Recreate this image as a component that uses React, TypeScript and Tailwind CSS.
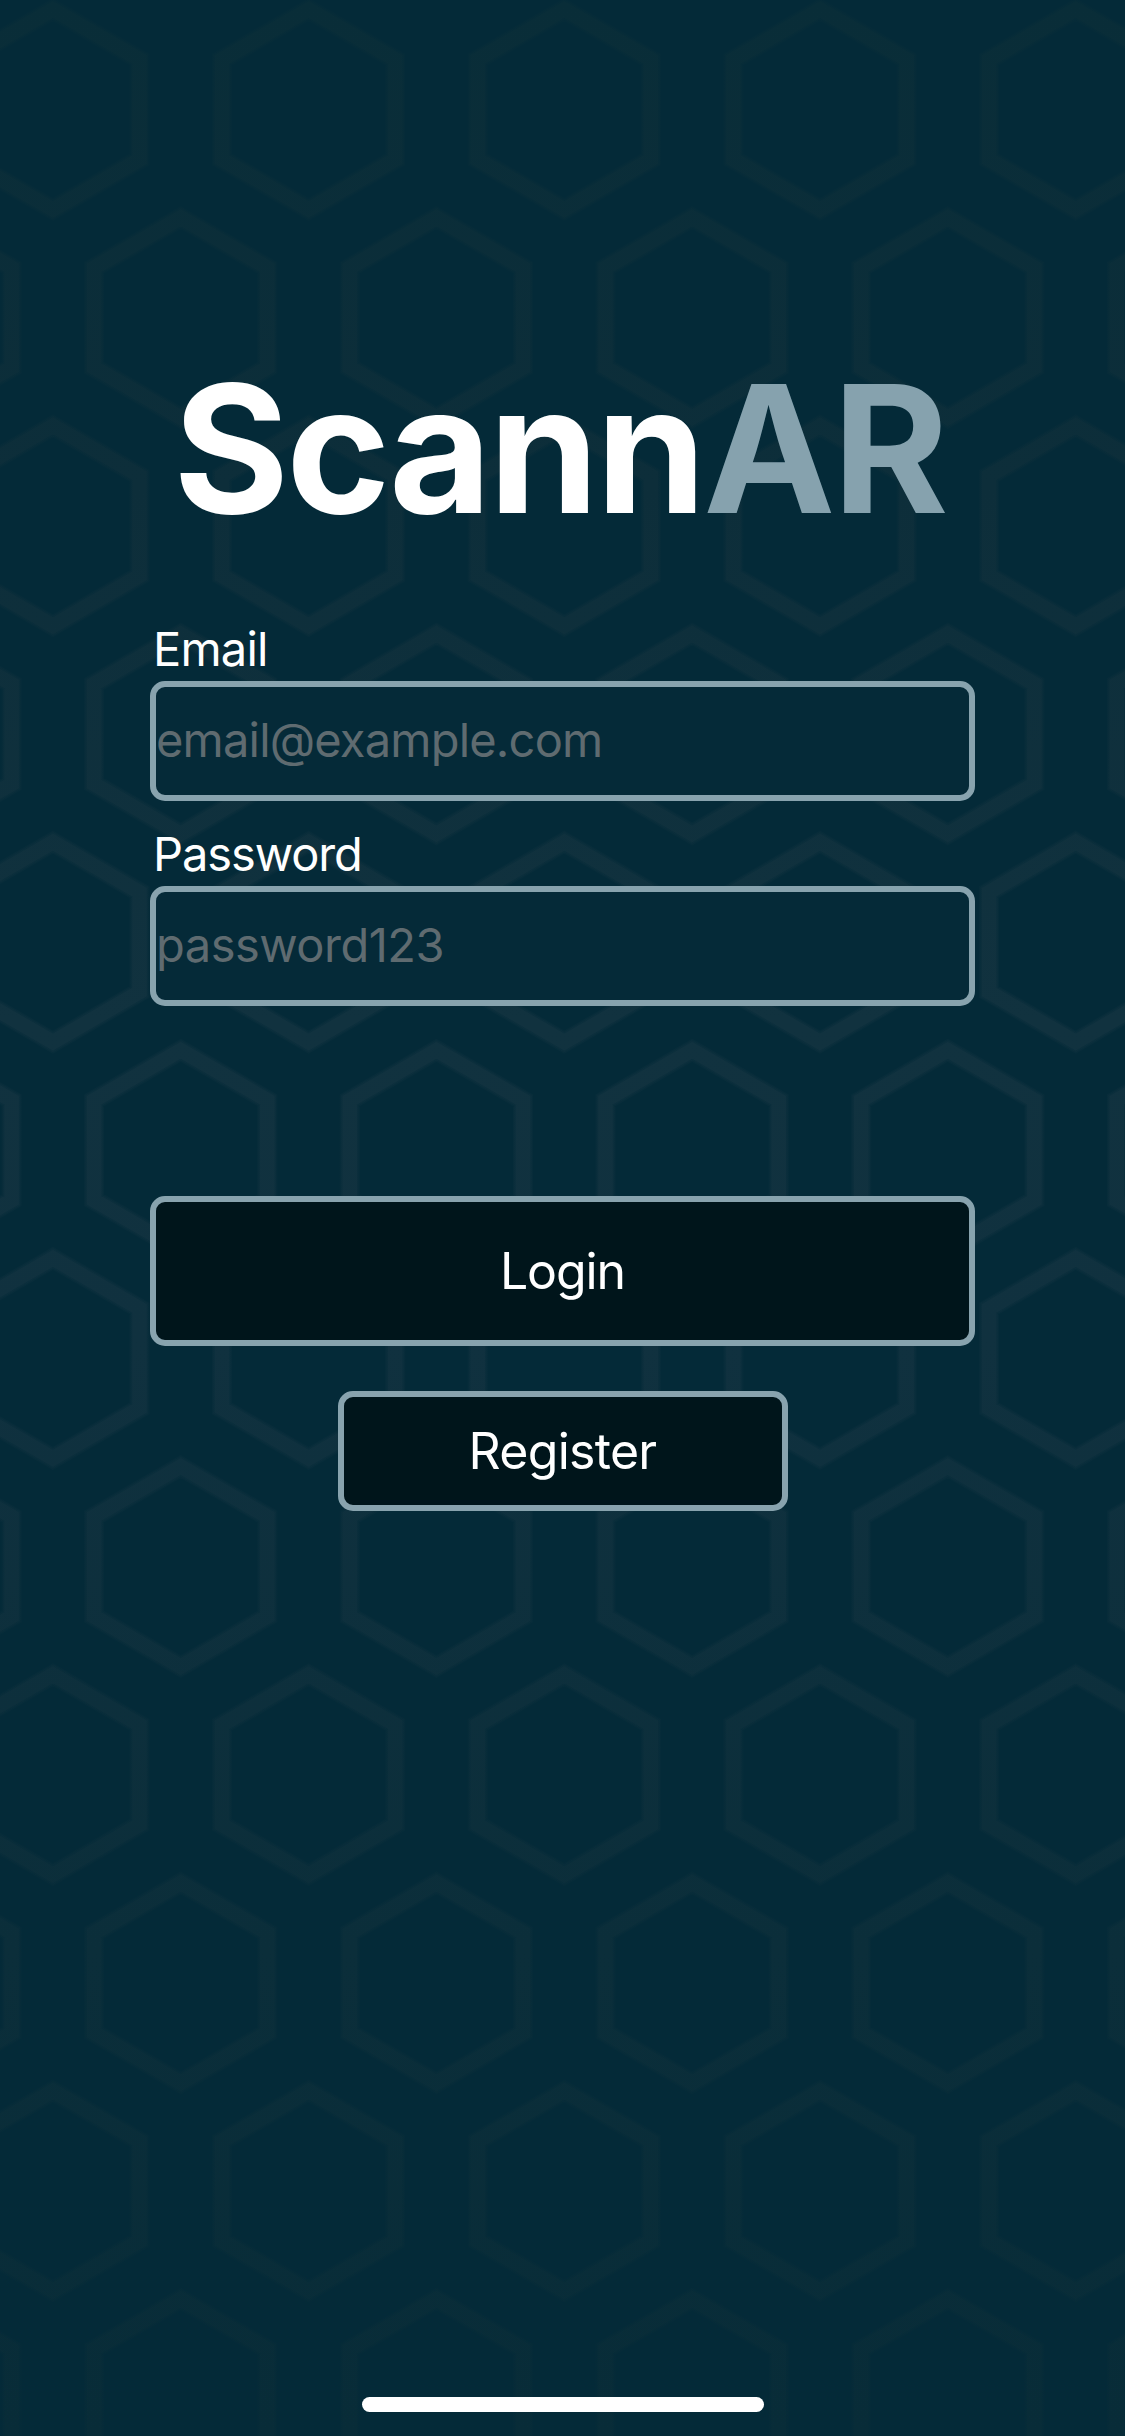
import React from "react";

const COLUMN_STEP = 255.7;
const ROW_STEP = 208.15;

const rows = Array.from({ length: 12 }, (_, row) => row);
const columns = Array.from({ length: 6 }, (_, column) => column);

const honeycombPath = rows
  .flatMap((row) =>
    columns.map((column) => {
      const x = (row % 2 === 0 ? 52.9 : -75) + column * COLUMN_STEP;
      const y = 109.5 + row * ROW_STEP;
      return `M${x},${y - 100} l86.6,50 v100 l-86.6,50 l-86.6,-50 v-100 Z`;
    }),
  )
  .join(" ");

function HoneycombBackground() {
  return (
    <svg
      aria-hidden="true"
      className="absolute inset-0 h-full w-full"
      viewBox="0 0 1125 2436"
      fill="none"
    >
      <defs>
        <linearGradient id="honeycomb" gradientUnits="userSpaceOnUse" x1="0" y1="0" x2="0" y2="2436">
          <stop offset="0" stopColor="#092d38" />
          <stop offset="0.2" stopColor="#0d2e3a" />
          <stop offset="0.42" stopColor="#11323f" />
          <stop offset="0.55" stopColor="#10313f" />
          <stop offset="0.8" stopColor="#0b2e3a" />
          <stop offset="1" stopColor="#082c38" />
        </linearGradient>
      </defs>
      {[
        { width: 20, opacity: 0.3 },
        { width: 17.5, opacity: 0.4 },
        { width: 14.5, opacity: 1 },
      ].map((layer) => (
        <path
          key={layer.width}
          stroke="url(#honeycomb)"
          strokeWidth={layer.width}
          strokeOpacity={layer.opacity}
          d={honeycombPath}
        />
      ))}
    </svg>
  );
}

type FieldProps = {
  id: string;
  label: string;
  placeholder: string;
  labelClass: string;
  inputClass: string;
};

function Field({ id, label, placeholder, labelClass, inputClass }: FieldProps) {
  return (
    <div className="flex flex-col">
      <label htmlFor={id} className={`pb-[2px] pl-[3px] text-[47px] leading-[58px] text-white ${labelClass}`}>
        {label}
      </label>
      <input
        id={id}
        type="text"
        placeholder={placeholder}
        className={`mt-[1px] h-[120px] w-full rounded-[15px] border-[6px] border-[#88a3ae] bg-[#052a38] pb-[3px] text-[47px] text-white outline-none placeholder:text-[#5f6b70] placeholder:opacity-100 ${inputClass}`}
      />
    </div>
  );
}

export default function App() {
  return (
    <div className="relative flex h-[2436px] w-[1125px] flex-col items-center overflow-hidden bg-[#042a38] font-['Inter',sans-serif]">
      <HoneycombBackground />
      <main className="relative flex w-[825px] flex-1 flex-col items-center">
        <h1 className="mt-[339px] mr-[6px] text-[177px] font-bold leading-[220px] tracking-[-3px] whitespace-nowrap text-white">
          Scann<span className="text-[#86a2ae]">AR</span>
        </h1>
        <form className="mt-[61px] flex w-full flex-col items-center">
          <div className="flex w-full flex-col gap-[24px]">
            <Field
              id="email"
              label="Email"
              placeholder="email@example.com"
              labelClass="tracking-[-0.8px]"
              inputClass="tracking-[-0.8px]"
            />
            <Field
              id="password"
              label="Password"
              placeholder="password123"
              labelClass="tracking-[-1.1px]"
              inputClass="tracking-[-0.5px]"
            />
          </div>
          <button
            type="button"
            className="mt-[190px] h-[150px] w-full rounded-[15px] border-[6px] border-[#88a3ae] bg-[#00151b] text-[50px] tracking-[-1.1px] text-white"
          >
            Login
          </button>
          <button
            type="button"
            className="mt-[45px] h-[120px] w-[450px] rounded-[15px] border-[6px] border-[#88a3ae] bg-[#00151b] text-[50px] tracking-[-0.7px] text-white"
          >
            Register
          </button>
        </form>
      </main>
      <div className="relative mb-[24px] h-[15px] w-[402px] rounded-full bg-white" />
    </div>
  );
}
